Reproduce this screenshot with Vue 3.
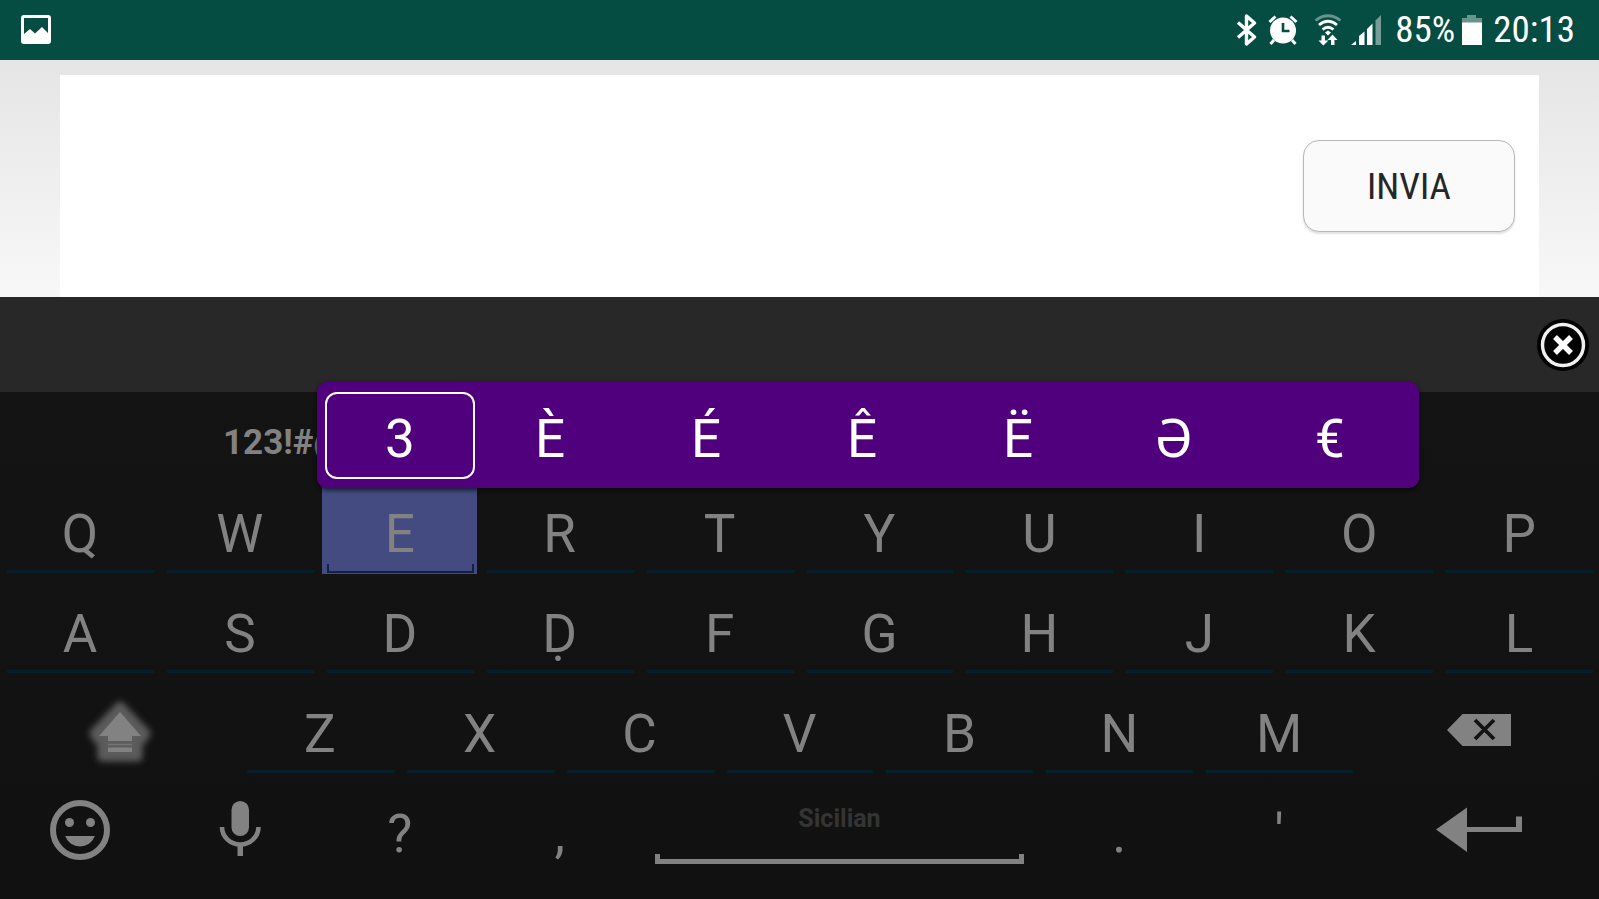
<script setup>
const letterRows = [
  ['Q', 'W', 'E', 'R', 'T', 'Y', 'U', 'I', 'O', 'P'],
  ['A', 'S', 'D', 'Ḍ', 'F', 'G', 'H', 'J', 'K', 'L']
]
const thirdRow = ['Z', 'X', 'C', 'V', 'B', 'N', 'M']
const variants = ['3', 'È', 'É', 'Ê', 'Ë', 'Ə', '€']
const active = 'E'
</script>

<template>
  <div class="screen">
    <header class="status">
      <svg class="picture" width="30" height="30" viewBox="0 0 30 30" aria-hidden="true">
        <path fill="#fff" fill-rule="evenodd" d="M3 0h24a3 3 0 0 1 3 3v23a3 3 0 0 1-3 3H3a3 3 0 0 1-3-3V3a3 3 0 0 1 3-3zM3 3v16l6-5 5 4.500 7-6.500 6 6V3z" />
      </svg>
      <div class="tray">
        <svg width="22" height="32" viewBox="0 0 22 32" aria-hidden="true">
          <path d="M2 8.500 18.500 23 10.500 30V2l8 7L2 23.500" fill="none" stroke="#fff" stroke-width="3.400" stroke-linejoin="round" />
        </svg>
        <svg class="alarm" width="30" height="32" viewBox="0 0 30 32" aria-hidden="true">
          <circle cx="15" cy="16.500" r="13" fill="#fff" />
          <path d="M1.500 8 7.500 2.500M28.500 8l-6-5.500M6 26l-3.500 4M24 26l3.500 4" stroke="#fff" stroke-width="3" fill="none" />
          <path d="M15 9v8h6.500" fill="none" stroke="#054c43" stroke-width="2.600" />
        </svg>
        <svg class="wifi" width="28" height="32" viewBox="0 0 28 32" aria-hidden="true">
          <g fill="none" stroke="#fff" stroke-width="2.800">
            <path d="M1.500 6.500Q14-3 26.500 6.500" opacity=".4" />
            <path d="M5 11q9-7.500 18 0" />
            <path d="M8.500 15.500q5.500-4.500 11 0" />
          </g>
          <path fill="#fff" d="m11 18.500 3-2 3 2-3 3zM7.500 21.500h3.500v5h3.500L9.300 31.500 4.500 26.500h3zM17 31v-5h-3.500l5-5.500 5 5.500H20.500v5z" />
        </svg>
        <svg class="signal" width="32" height="32" viewBox="0 0 32 32" aria-hidden="true">
          <path fill="#fff" d="M1 31l5-4v4zM9 31v-9l5.500-4.500V31zM17 31V15l5.500-5.500V31z" />
          <path fill="#fff" opacity=".45" d="M25.500 31V6.500L31 1v30z" />
        </svg>
        <span class="level">85%</span>
        <svg class="battery" width="20" height="32" viewBox="0 0 20 32" aria-hidden="true">
          <path fill="#fff" opacity=".4" d="M0 4h5V1h9v3h6v5H0z" />
          <path fill="#fff" d="M0 8.500h20V31H0z" />
        </svg>
        <time class="clock">20:13</time>
      </div>
    </header>

    <main class="page">
      <div class="card">
        <button class="send" type="button">INVIA</button>
      </div>
    </main>

    <section class="ime" aria-label="Sicilian">
      <div class="suggestions">
        <button class="close" type="button" aria-label="Close">
          <svg width="52" height="52" viewBox="0 0 52 52" aria-hidden="true">
            <circle cx="26" cy="26" r="26" fill="#000" />
            <circle cx="26" cy="26" r="20.500" fill="none" stroke="#f0f0f0" stroke-width="3.400" />
            <path d="m18 18 16 16m0-16L18 34" stroke="#fff" stroke-width="5.400" />
          </svg>
        </button>
      </div>

      <div class="keyboard">
        <div class="modes">
          <button class="mode" type="button">123!#@</button>
        </div>

        <div v-for="(row, i) in letterRows" :key="i" class="row">
          <button v-for="k in row" :key="k" type="button" class="key lined" :class="{ active: k === active }">{{ k }}</button>
        </div>

        <div class="row">
          <button type="button" class="key icon wide" aria-label="Shift">
            <svg width="80" height="80" viewBox="0 0 80 80" aria-hidden="true">
              <defs>
                <filter id="glow" x="-50%" y="-50%" width="200%" height="200%"><feGaussianBlur stdDeviation="3" /></filter>
              </defs>
              <path d="M40 16 66 43 62 50H58V67H22V50H18L14 43z" fill="#5c5c5c" stroke="#5c5c5c" stroke-width="9" stroke-linejoin="round" filter="url(#glow)" />
              <path d="M40 22 61 46H52V51H28V46H19zM28 57.500h24v4.500H28z" fill="#828282" />
              <path d="M28 54.500h24" stroke="#747474" stroke-width="1.500" />
            </svg>
          </button>
          <button v-for="k in thirdRow" :key="k" type="button" class="key lined">{{ k }}</button>
          <button type="button" class="key icon wide" aria-label="Backspace">
            <svg width="64" height="32" viewBox="0 0 64 32" aria-hidden="true">
              <path d="M15.500 0H64v32H15.500L0 16z" fill="#828282" />
              <path d="m28 6 19 19m0-19L28 25" stroke="#131313" stroke-width="3.800" />
            </svg>
          </button>
        </div>

        <div class="row">
          <button type="button" class="key icon" aria-label="Emoji">
            <svg width="60" height="60" viewBox="0 0 60 60" aria-hidden="true">
              <circle cx="30" cy="30" r="27" fill="none" stroke="#828282" stroke-width="6" />
              <circle cx="19.500" cy="22.500" r="4.500" fill="#828282" />
              <circle cx="40.500" cy="22.500" r="4.500" fill="#828282" />
              <path d="M15 36h30q-5 10.500-15 10.500T15 36z" fill="#828282" />
            </svg>
          </button>
          <button type="button" class="key icon" aria-label="Voice input">
            <svg width="42" height="60" viewBox="0 0 42 60" aria-hidden="true">
              <rect x="12.500" y="1" width="17.500" height="35" rx="8.700" fill="#828282" />
              <path d="M3 27a18.200 17.500 0 0 0 36.500 0" fill="none" stroke="#828282" stroke-width="4.600" />
              <path d="M18.500 44h5.500v12h-5.500z" fill="#828282" />
            </svg>
          </button>
          <button type="button" class="key">?</button>
          <button type="button" class="key">,</button>
          <button type="button" class="key space">
            <span class="language">Sicilian</span>
            <span class="bracket"></span>
          </button>
          <button type="button" class="key">.</button>
          <button type="button" class="key">'</button>
          <button type="button" class="key icon wide" aria-label="Enter">
            <svg width="86" height="46" viewBox="0 0 86 46" aria-hidden="true">
              <path d="M0 22.500 31 .500V20H80V9.500h6V25H31v20z" fill="#828282" />
            </svg>
          </button>
        </div>

        <div class="popup">
          <button v-for="(v, i) in variants" :key="v" type="button" class="variant" :class="{ chosen: i === 0 }">{{ v }}</button>
        </div>
      </div>
    </section>
  </div>
</template>

<style>
body {
  margin: 0;
  background: #121212;
}
</style>

<style scoped>
.screen {
  min-height: 100vh;
  display: flex;
  flex-direction: column;
  font-family: Roboto, "Noto Sans", sans-serif;
}
button {
  font: inherit;
  color: inherit;
  border: 0;
  padding: 0;
  background: none;
}
svg {
  display: block;
  flex: none;
}
.status {
  height: 60px;
  box-sizing: border-box;
  padding: 0 24px 0 21px;
  display: flex;
  align-items: center;
  justify-content: space-between;
  background: #054c43;
  color: #fff;
}
.tray {
  display: flex;
  align-items: center;
  font-family: "Roboto Condensed", Roboto, sans-serif;
  font-size: 37px;
  line-height: 60px;
}
.alarm {
  margin-left: 10px;
}
.wifi {
  margin-left: 16px;
}
.signal {
  margin-left: 8px;
}
.level {
  margin-left: 13px;
}
.battery {
  margin: 0 11px 0 7px;
}
.page {
  height: 237px;
  box-sizing: border-box;
  padding: 15px 60px 0;
  display: flex;
  background: linear-gradient(#e5e5e5, #f8f8f8);
}
.card {
  flex: 1;
  padding: 65px 24px 0;
  display: flex;
  align-items: flex-start;
  justify-content: flex-end;
  background: #fff;
}
.send {
  width: 212px;
  height: 92px;
  border: 1px solid #b8b8b8;
  border-radius: 16px;
  background: #fafafa;
  box-shadow: 0 2px 2px rgba(0, 0, 0, 0.12);
  color: #262626;
  font-family: "Roboto Condensed", Roboto, sans-serif;
  font-size: 37px;
}
.ime {
  flex: 1;
  display: flex;
  flex-direction: column;
}
.suggestions {
  height: 95px;
  padding-right: 10px;
  display: flex;
  align-items: center;
  justify-content: flex-end;
  background: #282828;
}
.keyboard {
  position: relative;
  flex: 1;
  background: linear-gradient(#141414, #111);
  color: #828282;
}
.modes {
  height: 82px;
  padding-left: 223px;
}
.mode {
  font-size: 35px;
  font-weight: 700;
  line-height: 102px;
}
.row {
  display: flex;
}
.key {
  position: relative;
  flex: 2 1 0;
  min-width: 0;
  height: 100px;
  padding-top: 20px;
  font-size: 53px;
  line-height: 80px;
}
.lined::after {
  content: "";
  position: absolute;
  left: 7px;
  right: 6px;
  bottom: 1px;
  height: 3px;
  background: #071f28;
}
.active {
  background: linear-gradient(#434b80, #434b80) center / calc(100% - 5px) 100% no-repeat;
}
.active::after {
  height: 7px;
  border: 2px solid #0d2349;
  border-top: 0;
  background: none;
}
.icon {
  padding-top: 12px;
  display: flex;
  align-items: center;
  justify-content: center;
}
.wide {
  flex-grow: 3;
}
.space {
  flex-grow: 5;
  padding-top: 30px;
  display: flex;
  flex-direction: column;
  justify-content: flex-start;
  color: #343434;
}
.language {
  align-self: center;
  font-size: 25px;
  font-weight: 700;
  line-height: 30px;
}
.bracket {
  height: 5px;
  margin: 20px 15px 0;
  border: 5px solid #828282;
  border-top: 0;
}
.popup {
  position: absolute;
  top: -10px;
  left: 317px;
  right: 180px;
  height: 106px;
  box-sizing: border-box;
  padding: 10px 11px 9px 8px;
  display: flex;
  border-radius: 10px;
  background: #51007d;
  box-shadow: 0 2px 5px rgba(0, 0, 0, 0.7);
  color: #fff;
}
.variant {
  flex: 1 1 0;
  padding-top: 6px;
  font-size: 53px;
  line-height: 80px;
}
.chosen {
  flex: 0 0 150px;
  margin-right: -3px;
  border: 2px solid #fff;
  border-radius: 12px;
  line-height: 76px;
}
</style>
